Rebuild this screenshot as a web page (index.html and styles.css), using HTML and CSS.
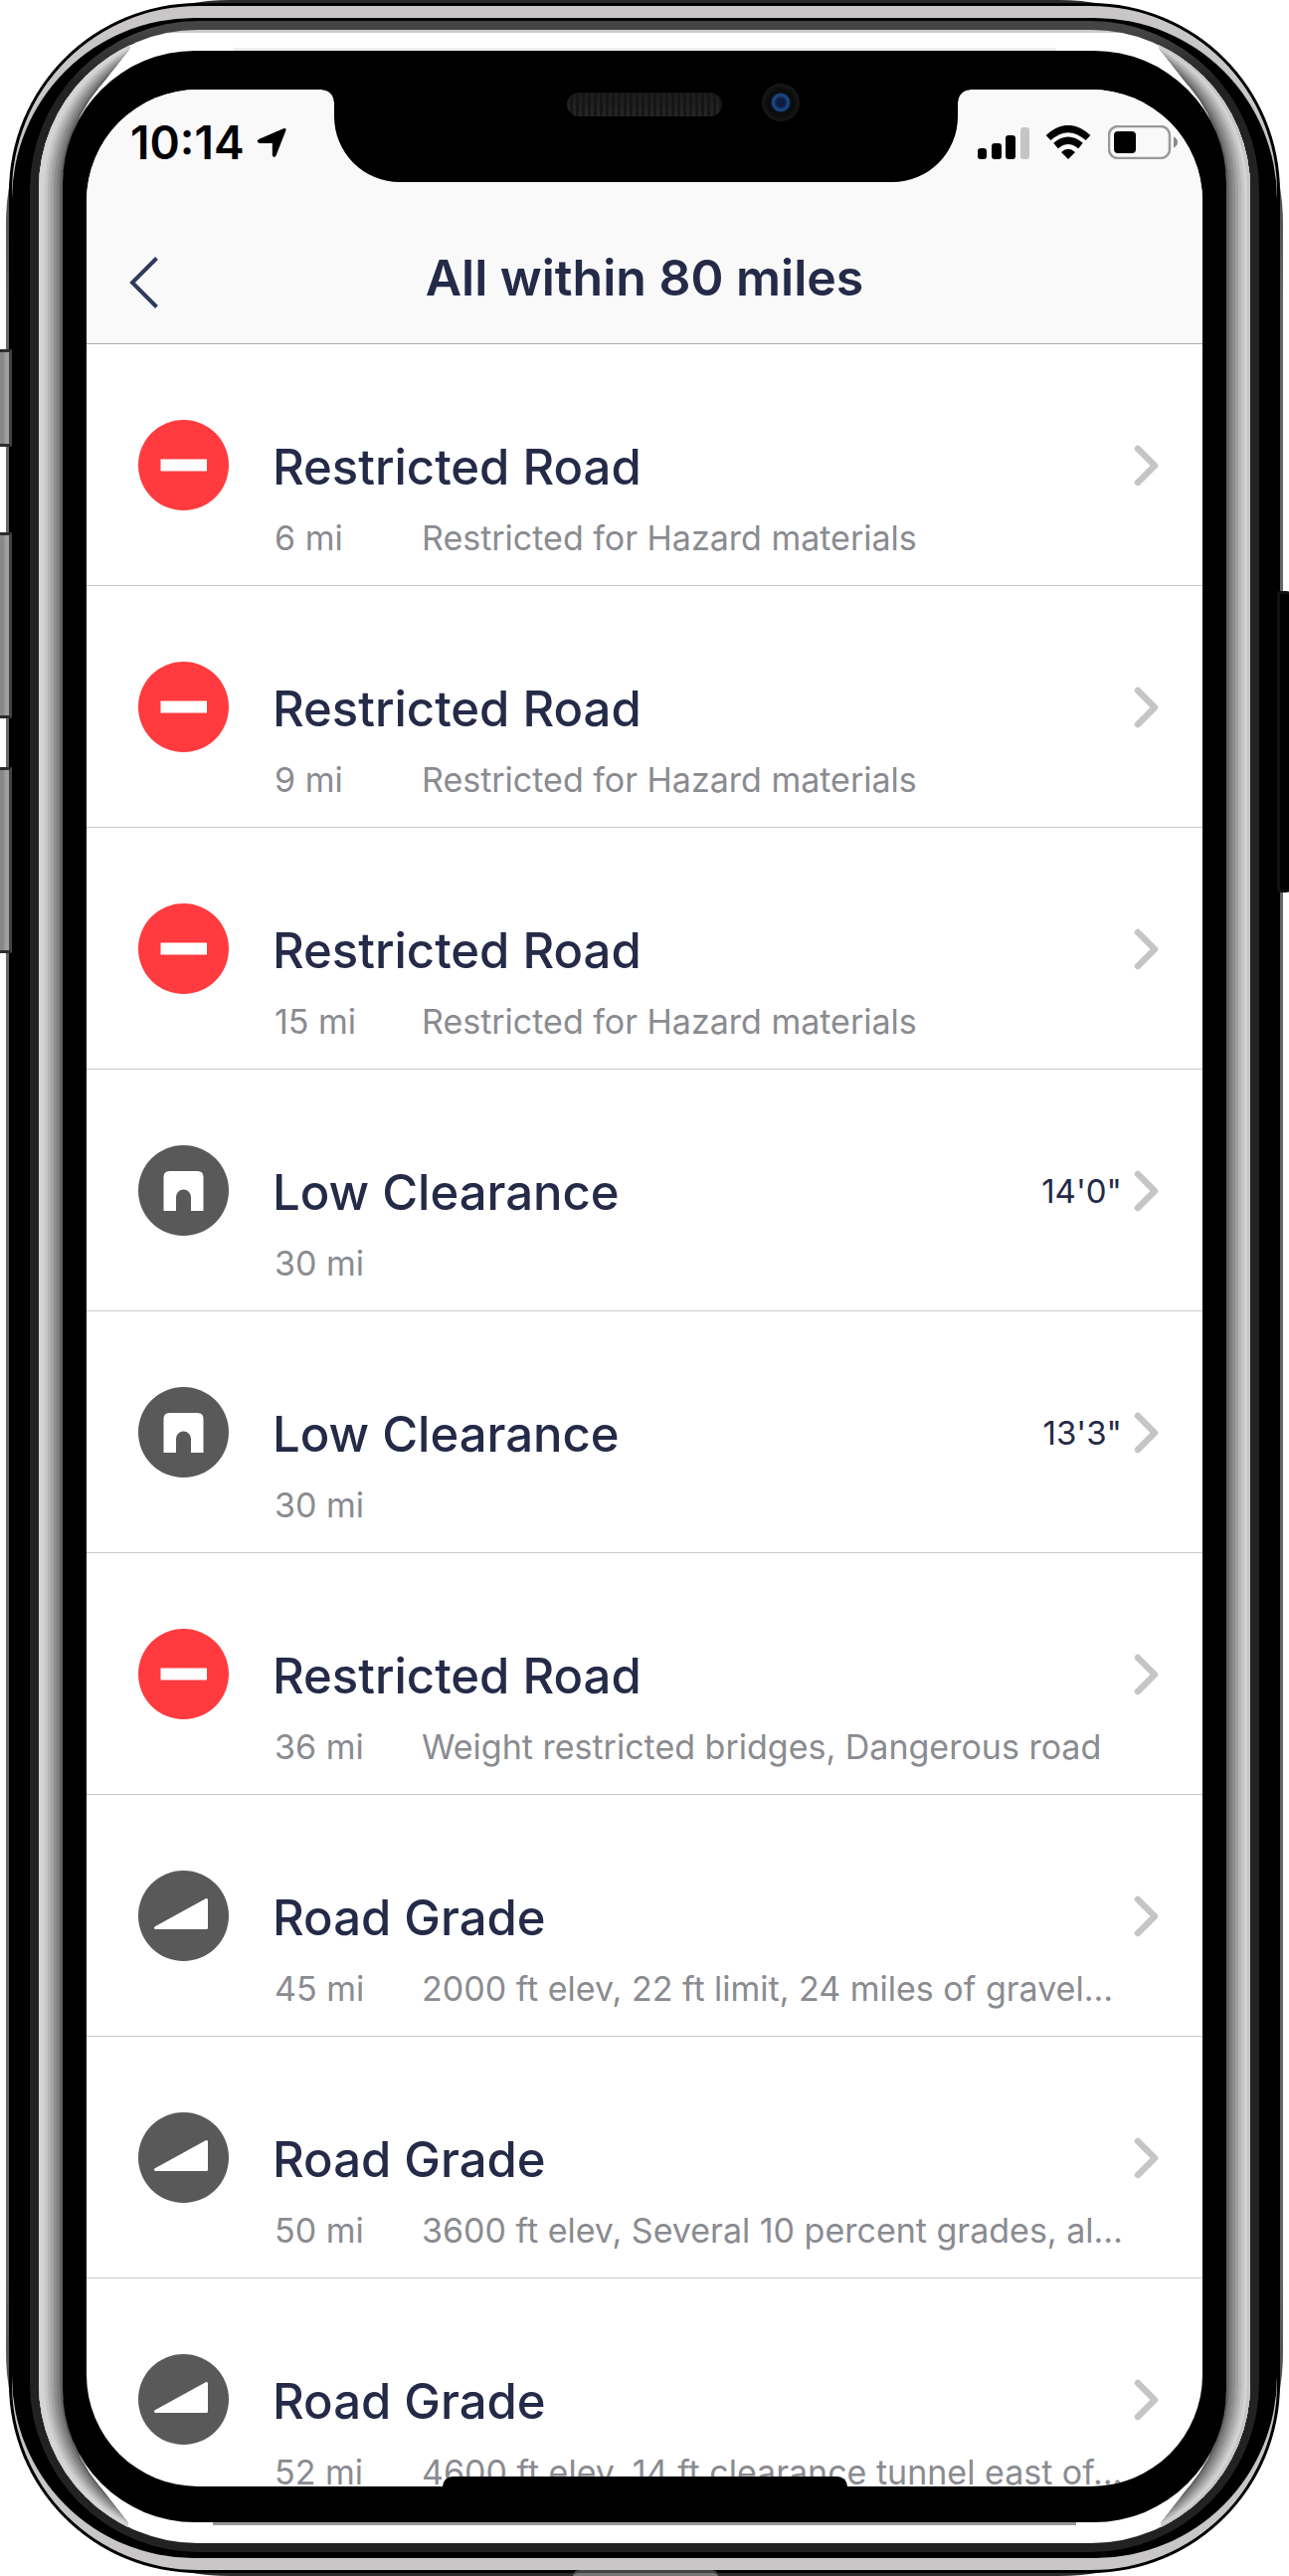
FILE: index.html
```html
<!DOCTYPE html>
<html lang="en">
<head>
<meta charset="utf-8">
<meta name="viewport" content="width=device-width, initial-scale=1">
<title>All within 80 miles</title>
<link rel="stylesheet" href="styles.css">
</head>
<body>
<svg class="sprite" aria-hidden="true">
  <symbol id="restricted" viewBox="0 0 91 91"><circle cx="45.5" cy="45.5" r="45.5" fill="#ff3b3f"/><path d="M22.5 39.5h46.500v12H22.500z" fill="#fff"/></symbol>
  <symbol id="clearance" viewBox="0 0 91 91"><circle cx="45.5" cy="45.500" r="45.500" fill="#595959"/><path d="M25.500 66V32q0-6 6-6h28q6 0 6 6v34H53V52a7.500 7.500 0 0 0-15 0v14z" fill="#fff"/></symbol>
  <symbol id="grade" viewBox="0 0 91 91"><circle cx="45.500" cy="45.500" r="45.500" fill="#595959"/><path d="M17.500 57.500 68.500 29.500V57.500z" fill="#fff" stroke="#fff" stroke-width="3" stroke-linejoin="round"/></symbol>
  <symbol id="chevron" viewBox="0 0 26 42"><path d="M4 4 21 21 4 38" fill="none" stroke="#c5c5c7" stroke-width="6.500" stroke-linecap="round" stroke-linejoin="round"/></symbol>
</svg>
<div class="device">
  <span class="key key-mute"></span>
  <span class="key key-up"></span>
  <span class="key key-down"></span>
  <span class="key key-power"></span>
  <span class="port"></span>
  <div class="layer shell"><div class="layer rim"><div class="layer band"><div class="layer chassis"><div class="layer groove"><div class="layer steel"><div class="layer bezel">
    <main class="screen">
      <header class="top">
        <div class="status">
          <span class="time">10:14</span>
          <svg class="location" width="30" height="31" viewBox="0 0 30 31" aria-hidden="true"><path d="M2 12 27.500 1q2.500-.6 2 2L19.500 28.500q-2 3-3.700-.5V16H3Q-1 14.500 2 12z"/></svg>
          <svg class="signal" width="52" height="33" viewBox="0 0 52 33" aria-hidden="true"><rect y="22" width="9" height="11" rx="3"/><rect x="14" y="17" width="10" height="16" rx="3"/><rect x="28" y="9" width="10" height="24" rx="3"/><rect x="43" y="1" width="9" height="32" rx="3" fill="#c5c5c5"/></svg>
          <svg class="wifi" width="46" height="34" viewBox="0 0 46 34" aria-hidden="true"><g fill="none" stroke="#000" stroke-width="7"><path d="M3 12.500Q23-5.500 43 12.500"/><path d="M10.500 20.500Q23 10 35.500 20.500"/></g><path d="M16 27Q23 20.500 30 27L23 34z"/></svg>
          <svg class="battery" width="70" height="34" viewBox="0 0 70 34" aria-hidden="true"><rect x="1" y="1" width="61" height="32" rx="9" fill="none" stroke="#999" stroke-width="2.500"/><rect x="6" y="6" width="22" height="22" rx="4"/><path d="M66 11.500q4 2 4 5.500t-4 5.500z" fill="#888"/></svg>
        </div>
        <nav class="bar">
          <button class="back" type="button" aria-label="Back"><svg width="30" height="62" viewBox="0 0 30 62" aria-hidden="true"><path d="M27.500 11.500 3 36 27.500 60.500" fill="none" stroke="#303a5c" stroke-width="4"/></svg></button>
          <h1>All within 80 miles</h1>
        </nav>
      </header>
      <ul class="list">
        <li><a class="row" href="#"><svg class="icon"><use href="#restricted"/></svg><h2>Restricted Road</h2><span class="end"><svg class="go"><use href="#chevron"/></svg></span><p><span class="miles">6 mi</span><span class="note">Restricted for Hazard materials</span></p></a></li>
        <li><a class="row" href="#"><svg class="icon"><use href="#restricted"/></svg><h2>Restricted Road</h2><span class="end"><svg class="go"><use href="#chevron"/></svg></span><p><span class="miles">9 mi</span><span class="note">Restricted for Hazard materials</span></p></a></li>
        <li><a class="row" href="#"><svg class="icon"><use href="#restricted"/></svg><h2>Restricted Road</h2><span class="end"><svg class="go"><use href="#chevron"/></svg></span><p><span class="miles">15 mi</span><span class="note">Restricted for Hazard materials</span></p></a></li>
        <li><a class="row" href="#"><svg class="icon"><use href="#clearance"/></svg><h2>Low Clearance</h2><span class="end">14'0"<svg class="go"><use href="#chevron"/></svg></span><p><span class="miles">30 mi</span></p></a></li>
        <li><a class="row" href="#"><svg class="icon"><use href="#clearance"/></svg><h2>Low Clearance</h2><span class="end">13'3"<svg class="go"><use href="#chevron"/></svg></span><p><span class="miles">30 mi</span></p></a></li>
        <li><a class="row" href="#"><svg class="icon"><use href="#restricted"/></svg><h2>Restricted Road</h2><span class="end"><svg class="go"><use href="#chevron"/></svg></span><p><span class="miles">36 mi</span><span class="note">Weight restricted bridges, Dangerous road</span></p></a></li>
        <li><a class="row" href="#"><svg class="icon"><use href="#grade"/></svg><h2>Road Grade</h2><span class="end"><svg class="go"><use href="#chevron"/></svg></span><p><span class="miles">45 mi</span><span class="note">2000 ft elev, 22 ft limit, 24 miles of gravel…</span></p></a></li>
        <li><a class="row" href="#"><svg class="icon"><use href="#grade"/></svg><h2>Road Grade</h2><span class="end"><svg class="go"><use href="#chevron"/></svg></span><p><span class="miles">50 mi</span><span class="note">3600 ft elev, Several 10 percent grades, al…</span></p></a></li>
        <li><a class="row" href="#"><svg class="icon"><use href="#grade"/></svg><h2>Road Grade</h2><span class="end"><svg class="go"><use href="#chevron"/></svg></span><p><span class="miles">52 mi</span><span class="note">4600 ft elev, 14 ft clearance tunnel east of…</span></p></a></li>
      </ul>
      <div class="home"></div>
    </main>
    <div class="notch"><span class="speaker"></span><span class="camera"></span></div>
  </div></div></div></div></div></div></div>
</div>
</body>
</html>
```
FILE: styles.css
```css
* { box-sizing: border-box; }
body { margin: 0; background: #fff; font-family: Inter, "Liberation Sans", sans-serif; color: #242a47; }
.sprite { position: absolute; width: 0; height: 0; }

/* Phone frame: nested rounded shells */
.device { position: relative; height: 100vh; min-height: 900px; padding: 0 6px; display: grid; grid-template-rows: minmax(0, 1fr); overflow: hidden; }
.layer { display: grid; grid-template-rows: minmax(0, 1fr); grid-template-columns: minmax(0, 1fr); }
.shell { padding: 3px; border-radius: 225px; background: linear-gradient(#2c2c2c 3px, #666 300px, #666 calc(100% - 300px), #2c2c2c calc(100% - 3px)); }
.rim { padding: 3px; border-radius: 190px; background: #000; }
.band { padding: 12px 0; border-radius: 187px; background: #c8c6c7; }
.chassis { padding: 3px 18px 6px; border-radius: 183px; background: #000; }
.groove { padding: 9px; border-radius: 170px; background: linear-gradient(#444 9px, #222 60px); }
.steel {
  position: relative; padding: 21px 24px; border-radius: 160px;
  background:
    linear-gradient(#eee, #eee) center 18px / calc(100% - 390px) 3px no-repeat,
    linear-gradient(#999, #999) center calc(100% - 18px) / calc(100% - 350px) 3px no-repeat,
    linear-gradient(#ccc 3px, #fff 3px);
}
/* Brushed side rails, tapering to a point at each corner */
.steel::before {
  content: ""; position: absolute; inset: 0; border-radius: 160px;
  clip-path: polygon(
    0 0, 92px 0, 92px 18px, 52px 70px, 38px 100px, 24px 170px,
    24px calc(100% - 170px), 38px calc(100% - 100px), 52px calc(100% - 70px), 90px calc(100% - 20px), 90px 100%,
    calc(100% - 90px) 100%, calc(100% - 90px) calc(100% - 20px), calc(100% - 52px) calc(100% - 70px), calc(100% - 38px) calc(100% - 100px), calc(100% - 24px) calc(100% - 170px),
    calc(100% - 24px) 170px, calc(100% - 38px) 100px, calc(100% - 52px) 70px, calc(100% - 92px) 18px, calc(100% - 92px) 0,
    100% 0, 100% 100%, 0 100%);
  box-shadow:
    inset 6px 0 #d4d4d4, inset 9px 0 #c6c6c6, inset 12px 0 #b4b4b4, inset 15px 0 #a2a2a2, inset 18px 0 #8e8e8e, inset 21px 0 #7c7c7c, inset 24px 0 #636363,
    inset -3px 0 #c6c6c6, inset -6px 0 #d4d4d4, inset -9px 0 #c6c6c6, inset -12px 0 #b4b4b4, inset -15px 0 #a2a2a2, inset -18px 0 #8e8e8e, inset -21px 0 #7c7c7c, inset -24px 0 #636363;
}
.bezel { position: relative; padding: 39px 24px 36px; border-radius: 133px; background: #000; }

.key { position: absolute; left: -6px; width: 18px; z-index: 1; border: 3px solid #2c2c2c; border-right-color: #444; border-radius: 6px 0 0 6px; background: linear-gradient(90deg, #888 6px, #a0a0a0 9px); }
.key-mute { top: 351px; height: 98px; }
.key-up { top: 535px; height: 187px; }
.key-down { top: 771px; height: 187px; }
.key-power { left: auto; right: -6px; width: 18px; top: 594px; height: 303px; border-color: #111; border-radius: 3px 9px 9px 3px; background: #000; }
.port { position: absolute; left: 50%; bottom: 0; z-index: 1; width: 146px; height: 6px; margin-left: -72px; border-top: 3px solid #444; border-radius: 6px 6px 0 0; background: #777; }

/* Screen */
.screen { position: relative; overflow: hidden; border-radius: 112px; background: #fff; }
.top { background: #f9f9f9; border-bottom: 1px solid #a9a8ae; }
.status { display: flex; align-items: center; height: 106px; padding: 0 25px 0 44px; color: #000; }
.time { font-size: 46px; font-weight: 600; line-height: 56px; }
.location { margin-left: 12px; }
.signal { margin-left: auto; }
.wifi { margin-left: 16px; }
.battery { margin-left: 17px; }
.bar { display: grid; grid-template-columns: 72px 1fr 72px; align-items: center; height: 149px; padding-top: 16px; }
.back { padding: 0 0 0 43px; border: 0; background: none; line-height: 0; }
h1 { margin: 0; text-align: center; font-size: 50px; font-weight: 600; line-height: 60px; }

.list { margin: 0; padding: 0; list-style: none; }
.list li { height: 243px; border-bottom: 1px solid #c8c8cd; }
.row { display: grid; grid-template-columns: 91px minmax(0, 1fr) auto; column-gap: 44px; padding: 76px 43px 0 52px; color: inherit; text-decoration: none; }
.icon { width: 91px; height: 91px; }
h2 { margin: 0; padding-top: 2px; font-size: 49px; font-weight: 500; line-height: 91px; white-space: nowrap; }
.end { display: flex; align-items: center; gap: 12px; height: 91px; font-size: 33px; }
.go { width: 26px; height: 42px; }
.row p { grid-column: 2 / 4; display: flex; margin: 0; font-size: 34px; line-height: 52px; color: #8a8b91; white-space: nowrap; }
.miles { flex: none; width: 150px; padding-left: 2px; }

/* Hardware that lies over the screen */
.notch { position: absolute; top: 39px; left: 50%; width: 627px; height: 93px; margin-left: -312px; border-radius: 0 0 66px 66px; background: #000; }
.notch::before, .notch::after { content: ""; position: absolute; top: 0; width: 12px; height: 12px; }
.notch::before { right: 100%; background: radial-gradient(circle at 0 100%, transparent 11px, #000 12px); }
.notch::after { left: 100%; background: radial-gradient(circle at 100% 100%, transparent 11px, #000 12px); }
.speaker { position: absolute; left: 234px; top: 3px; width: 156px; height: 24px; border-radius: 12px; background: repeating-linear-gradient(90deg, transparent 0 3px, #161616 3px 6px), linear-gradient(#1b1b1b, #262626); }
.camera { position: absolute; left: 430px; top: -6px; width: 38px; height: 38px; border-radius: 50%; background: radial-gradient(circle, #0c1c40 0 4px, #1d4f8c 8px, #0a1020 10px, #0a0a0a 12px, #161616 18px); }
.home { position: absolute; left: 50%; bottom: -10px; width: 407px; height: 20px; margin-left: -203px; border-radius: 10px; background: #000; }
```
